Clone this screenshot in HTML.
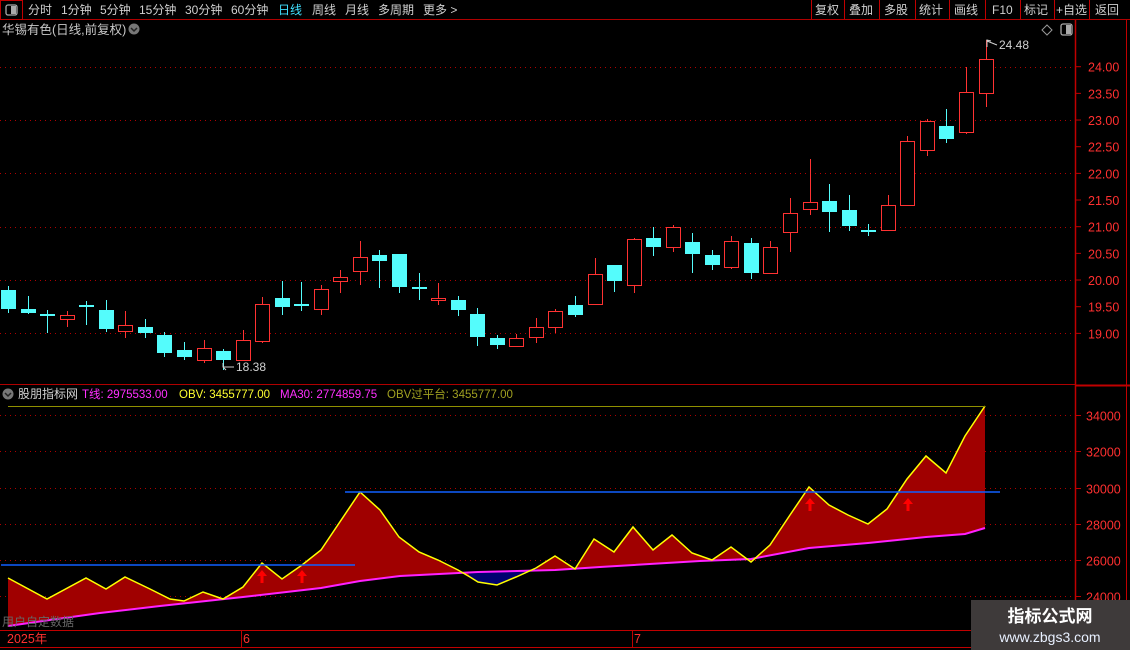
<!DOCTYPE html>
<html><head><meta charset="utf-8"><style>
body{margin:0;background:#000;width:1130px;height:650px;overflow:hidden;font-family:"Liberation Sans","Noto Sans CJK SC",sans-serif;}
svg{position:absolute;left:0;top:0}
text{font-family:"Liberation Sans","Noto Sans CJK SC",sans-serif}
</style></head><body>
<svg id="s" width="1130" height="650" xmlns="http://www.w3.org/2000/svg">
<line x1="0" y1="19.5" x2="1130" y2="19.5" stroke="#b00000"/>
<line x1="0" y1="384.5" x2="1075" y2="384.5" stroke="#b00000"/>
<line x1="0" y1="630.5" x2="1130" y2="630.5" stroke="#c00000"/>
<line x1="0" y1="647.5" x2="1130" y2="647.5" stroke="#c00000"/>
<line x1="1075.5" y1="20" x2="1075.5" y2="630" stroke="#c00000" stroke-width="1.5"/>
<line x1="1126.5" y1="20" x2="1126.5" y2="650" stroke="#c00000"/>
<line x1="1075" y1="385.5" x2="1130" y2="385.5" stroke="#c00000" stroke-width="2"/>
<rect x="0.5" y="0.5" width="22" height="19" fill="none" stroke="#c00000"/>
<rect x="6" y="5" width="11" height="10" rx="2" fill="none" stroke="#aaa" stroke-width="1.3"/>
<rect x="11" y="6" width="5" height="8" fill="#aaa"/>
<g font-size="12" fill="#d0d0d0">
<text x="28" y="14">分时</text><text x="61" y="14">1分钟</text><text x="100" y="14">5分钟</text>
<text x="139" y="14">15分钟</text><text x="185" y="14">30分钟</text><text x="231" y="14">60分钟</text>
<text x="278" y="14" fill="#40e0ff">日线</text><text x="312" y="14">周线</text><text x="345" y="14">月线</text>
<text x="378" y="14">多周期</text><text x="423" y="14">更多 &gt;</text>
<text x="815" y="14">复权</text><text x="849" y="14">叠加</text><text x="884" y="14">多股</text>
<text x="919" y="14">统计</text><text x="954" y="14">画线</text><text x="992" y="14">F10</text>
<text x="1024" y="14">标记</text><text x="1056" y="14">+自选</text><text x="1095" y="14">返回</text>
</g>
<g stroke="#c00000"><line x1="811.5" y1="0" x2="811.5" y2="19"/><line x1="844.5" y1="0" x2="844.5" y2="19"/><line x1="879.5" y1="0" x2="879.5" y2="19"/><line x1="915.5" y1="0" x2="915.5" y2="19"/><line x1="949.5" y1="0" x2="949.5" y2="19"/><line x1="985.5" y1="0" x2="985.5" y2="19"/><line x1="1020.5" y1="0" x2="1020.5" y2="19"/><line x1="1054.5" y1="0" x2="1054.5" y2="19"/><line x1="1089.5" y1="0" x2="1089.5" y2="19"/></g>
<text x="2" y="34" font-size="12.5" fill="#c8c8c8">华锡有色(日线,前复权)</text>
<circle cx="134" cy="29" r="5.5" fill="#777"/><path d="M131 28 L134 31 L137 28" stroke="#222" stroke-width="1.5" fill="none"/>
<path d="M1047 25 L1052 30 L1047 35 L1042 30 Z" fill="none" stroke="#999"/>
<rect x="1061" y="24" width="11" height="11" rx="2" fill="none" stroke="#aaa" stroke-width="1.3"/><rect x="1066" y="25" width="5" height="9" fill="#aaa"/>
<g id="grid" stroke="#b00000" stroke-dasharray="1,4"></g>
<g id="c"></g>
<text x="999" y="49" font-size="12" fill="#d0d0d0">24.48</text>
<path d="M987 47 L987 40 L991 41 M987 41 L997 45" stroke="#d0d0d0" fill="none"/>
<text x="236" y="371" font-size="12" fill="#d0d0d0">18.38</text>
<path d="M223 367 L234 367 M223 363 L223 367 L226 370" stroke="#d0d0d0" fill="none"/>
<g id="ax" font-size="12.5" fill="#ff3030"></g>
<circle cx="8" cy="394" r="5.5" fill="#777"/><path d="M5 393 L8 396 L11 393" stroke="#222" stroke-width="1.5" fill="none"/>
<text x="18" y="398" font-size="12" fill="#d0d0d0">股朋指标网</text>
<text x="82" y="398" font-size="11.5" fill="#ff30ff">T线: 2975533.00</text>
<text x="179" y="398" font-size="11.5" fill="#ffff30">OBV: 3455777.00</text>
<text x="280" y="398" font-size="11.5" fill="#ff30ff">MA30: 2774859.75</text>
<text x="387" y="398" font-size="11.5" fill="#a0a020">OBV过平台: 3455777.00</text>
<g id="ind"></g>
<text x="2" y="626" font-size="12" fill="#666">用户自定数据</text>
<text x="7" y="643" font-size="12.5" fill="#ff3030">2025年</text>
<line x1="241.5" y1="631" x2="241.5" y2="647" stroke="#c00000"/><text x="243" y="643" font-size="12.5" fill="#ff3030">6</text>
<line x1="632.5" y1="631" x2="632.5" y2="647" stroke="#c00000"/><text x="634" y="643" font-size="12.5" fill="#ff3030">7</text>
<rect x="971" y="600" width="159" height="50" fill="#3e3a3a"/>
<text x="1050" y="622" font-size="17" font-weight="bold" fill="#fff" text-anchor="middle">指标公式网</text>
<text x="1050" y="642" font-size="14" fill="#e8f0ff" text-anchor="middle">www.zbgs3.com</text>
</svg>
<script>
var NS="http://www.w3.org/2000/svg";
function el(p,t,a){var e=document.createElementNS(NS,t);for(var k in a)e.setAttribute(k,a[k]);p.appendChild(e);return e;}
var g=document.getElementById('grid'),ax=document.getElementById('ax');
[24,23,22,21,20,19].forEach(function(p){var y=Math.round(66.7+(24-p)*53.33)+.5;el(g,'line',{x1:0,y1:y,x2:1075,y2:y});});
[24,23.5,23,22.5,22,21.5,21,20.5,20,19.5,19].forEach(function(p){var y=66.7+(24-p)*53.33;var t=el(ax,'text',{x:1088,y:y+5});t.textContent=p.toFixed(2);el(ax,'line',{x1:1075,y1:y,x2:1081,y2:y,stroke:'#c00000'});});
[34000,32000,30000,28000,26000,24000].forEach(function(v){var y=Math.round(415+(34000-v)*0.018125)+.5;el(g,'line',{x1:0,y1:y,x2:1075,y2:y});var t=el(ax,'text',{x:1086,y:y+5});t.textContent=v;el(ax,'line',{x1:1075,y1:y,x2:1081,y2:y,stroke:'#c00000'});});
var C=[['c',290,309,286,313],['c',309,313,296,314],['c',314,314,310,333],['r',315,319,311,327],['c',305,307,301,325],['c',310,329,300,332],['r',325,331,311,338],['c',327,333,319,338],['c',335,353,332,357],['c',350,357,342,360],['r',348,360,340,363],['c',351,360,349,370],['r',340,360,330,360],['r',304,341,297,343],['c',298,307,281,315],['c',304,304,282,311],['r',289,309,285,315],['r',277,281,270,293],['r',257,271,241,285],['c',255,261,250,288],['c',254,287,254,293],['c',287,287,273,300],['r',298,300,283,305],['c',300,310,296,316],['c',314,337,308,346],['c',338,345,335,349],
['r',338,346,334,347],['r',327,337,318,343],['r',311,327,309,333],['c',305,315,296,317],['r',274,304,258,304],['c',265,281,265,292],['r',239,285,238,293],['c',238,247,227,256],['r',227,247,225,252],['c',242,254,233,273],['c',255,265,250,270],['r',241,267,236,269],['c',243,273,238,279],['r',247,273,241,273],['r',213,232,198,252],['r',202,209,159,215],['c',201,212,184,232],['c',210,226,195,231],['c',230,232,224,236],['r',205,230,195,230],['r',141,205,136,205],['r',121,150,119,156],['c',126,139,109,143],['r',92,132,67,134],['r',59,93,40,107]];
var cg=document.getElementById('c');
C.forEach(function(d,i){var x=Math.round(8+i*19.55);var col=d[0]=='r'?'#ff3232':'#54fcfc';
el(cg,'line',{x1:x+.5,y1:d[3],x2:x+.5,y2:d[4],stroke:col});
var h=d[2]-d[1];
if(d[0]=='r'){if(h<2)el(cg,'rect',{x:x-7,y:d[1],width:15,height:2,fill:col});else el(cg,'rect',{x:x-6.5,y:d[1]+.5,width:14,height:h,fill:'#000',stroke:col});}
else{el(cg,'rect',{x:x-7,y:d[1],width:15,height:Math.max(h,2),fill:col});}
});
var O=[[8,578],[47,599],[86,578],[106,589],[125,577],[150,589],[170,599],[184,601],[203,592],[223,599],[243,587],[262,563],[282,579],[302,565],[321,550],[360,492],[380,510],[399,537],[419,552],[438,560],[458,570],[470,577],[478,582],[497,585],[516,577],[536,568],[555,556],[575,569],[594,539],[614,552],[633,527],[653,550],[672,535],[692,553],[712,560],[731,547],[751,562],[770,545],[790,515],[809,487],[829,505],[848,515],[868,524],[887,509],[907,479],[926,456],[946,473],[965,436],[985,406]];
var M=[[8,626],[50,620],[100,613],[160,606],[243,597],[321,588],[360,581],[400,576],[478,572],[555,570],[600,567],[700,561],[751,559],[809,548],[868,543],[926,537],[965,534],[985,528]];
var ind=document.getElementById('ind');
function pts(a){return a.map(function(p){return p.join(',')}).join(' ');}
el(ind,'polygon',{points:pts(O)+' '+pts(M.slice().reverse()),fill:'#a00000'});
el(ind,'polygon',{points:'468,573 478,572 516,571 538,570 536,568 516,577 497,585 478,582 470,577',fill:'#000070'});
el(ind,'polyline',{points:pts(M),fill:'none',stroke:'#ff20ff','stroke-width':2});
el(ind,'polyline',{points:pts(O),fill:'none',stroke:'#ffff00','stroke-width':1.5});
el(ind,'line',{x1:8,y1:406.5,x2:985,y2:406.5,stroke:'#909000'});
el(ind,'line',{x1:1,y1:565,x2:355,y2:565,stroke:'#1060ff','stroke-width':1.5});
el(ind,'line',{x1:345,y1:492,x2:1000,y2:492,stroke:'#1060ff','stroke-width':1.5});
[[262,577],[302,577],[810,505],[908,505]].forEach(function(p){var x=p[0],y=p[1];el(ind,'path',{d:'M'+x+' '+(y-7)+' L'+(x+5)+' '+(y-1)+' L'+(x+1.5)+' '+(y-1)+' L'+(x+1.5)+' '+(y+6)+' L'+(x-1.5)+' '+(y+6)+' L'+(x-1.5)+' '+(y-1)+' L'+(x-5)+' '+(y-1)+' Z',fill:'#ff0000'});});
</script>
</body></html>
